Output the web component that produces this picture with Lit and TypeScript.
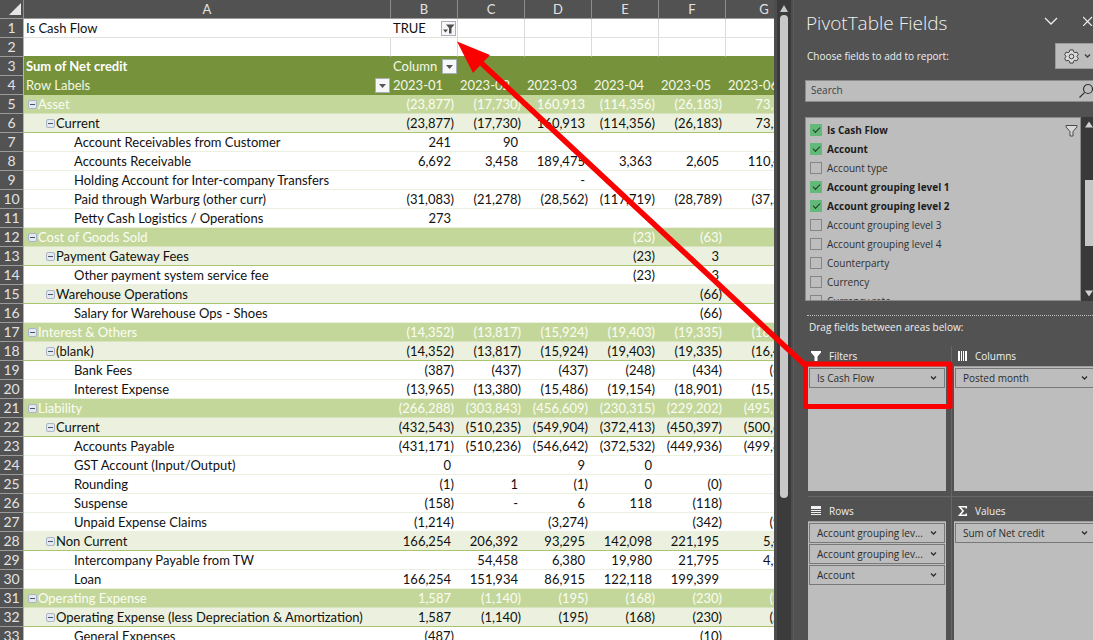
import { LitElement, html, svg, css, nothing } from "lit";
import { customElement } from "lit/decorators.js";
import { classMap } from "lit/directives/class-map.js";

type Kind = "page" | "blank" | "head" | "l1" | "l2" | "item";
interface Row {
  kind: Kind;
  label: string;
  cells: string[];
}

const r = (kind: Kind, label: string, cells = ""): Row => ({
  kind,
  label,
  cells: Array.from({ length: 6 }, (_, i) => (cells.split("|")[i] ?? "").trim()),
});

const ROWS: Row[] = [
  r("page", "Is Cash Flow", "TRUE"),
  r("blank", ""),
  r("head", "Sum of Net credit", "Column"),
  r("head", "Row Labels", "2023-01|2023-02|2023-03|2023-04|2023-05|2023-06"),
  r("l1", "Asset", "(23,877)|(17,730)|160,913|(114,356)|(26,183)|73,212"),
  r("l2", "Current", "(23,877)|(17,730)|160,913|(114,356)|(26,183)|73,212"),
  r("item", "Account Receivables from Customer", "241|90"),
  r("item", "Accounts Receivable", "6,692|3,458|189,475|3,363|2,605|110,461"),
  r("item", "Holding Account for Inter-company Transfers", "||-"),
  r("item", "Paid through Warburg (other curr)", "(31,083)|(21,278)|(28,562)|(117,719)|(28,789)|(37,249)"),
  r("item", "Petty Cash Logistics / Operations", "273"),
  r("l1", "Cost of Goods Sold", "|||(23)|(63)"),
  r("l2", "Payment Gateway Fees", "|||(23)|3"),
  r("item", "Other payment system service fee", "|||(23)|3"),
  r("l2", "Warehouse Operations", "||||(66)"),
  r("item", "Salary for Warehouse Ops - Shoes", "||||(66)"),
  r("l1", "Interest & Others", "(14,352)|(13,817)|(15,924)|(19,403)|(19,335)|(16,412)"),
  r("l2", "(blank)", "(14,352)|(13,817)|(15,924)|(19,403)|(19,335)|(16,412)"),
  r("item", "Bank Fees", "(387)|(437)|(437)|(248)|(434)|(640)"),
  r("item", "Interest Expense", "(13,965)|(13,380)|(15,486)|(19,154)|(18,901)|(15,772)"),
  r("l1", "Liability", "(266,288)|(303,843)|(456,609)|(230,315)|(229,202)|(495,121)"),
  r("l2", "Current", "(432,543)|(510,235)|(549,904)|(372,413)|(450,397)|(500,613)"),
  r("item", "Accounts Payable", "(431,171)|(510,236)|(546,642)|(372,532)|(449,936)|(499,820)"),
  r("item", "GST Account (Input/Output)", "0||9|0"),
  r("item", "Rounding", "(1)|1|(1)|0|(0)"),
  r("item", "Suspense", "(158)|-|6|118|(118)|158"),
  r("item", "Unpaid Expense Claims", "(1,214)||(3,274)||(342)|(951)"),
  r("l2", "Non Current", "166,254|206,392|93,295|142,098|221,195|5,492"),
  r("item", "Intercompany Payable from TW", "|54,458|6,380|19,980|21,795|4,992"),
  r("item", "Loan", "166,254|151,934|86,915|122,118|199,399|500"),
  r("l1", "Operating Expense", "1,587|(1,140)|(195)|(168)|(230)|(244)"),
  r("l2", "Operating Expense (less Depreciation & Amortization)", "1,587|(1,140)|(195)|(168)|(230)|(244)"),
  r("item", "General Expenses", "(487)||||(10)"),
];

const caret = svg`<path d="M1 1.5 L3.5 4 L6 1.5" fill="none" stroke="currentColor" stroke-width="1.3"/>`;

@customElement("pivot-sheet")
export class PivotSheet extends LitElement {
  static styles = css`
    :host {
      display: block;
      overflow: hidden;
      background: #fff;
      font-family: Lato, "Noto Sans", sans-serif;
      font-size: 13px;
      color: #111;
    }
    table {
      table-layout: fixed;
      width: 803px;
      border-collapse: separate;
      border-spacing: 0;
    }
    .c-num { width: 24px; }
    .c-a { width: 367px; }
    .c-m { width: 67px; }
    .c-g { width: 77px; }
    th, td {
      box-sizing: border-box;
      height: 19px;
      padding: 0 2px;
      line-height: 18px;
      font-weight: 400;
      text-align: left;
      white-space: nowrap;
      border-bottom: 1px solid #ebf0df;
      overflow: hidden;
    }
    .col, .num {
      padding: 0;
      text-align: center;
      background: #525252;
      color: #e2e2e2;
      border-right: 1px solid #8c8c8c;
      border-bottom: 1px solid #9b9b9b;
    }
    .corner svg { display: block; margin-left: 9px; }
    .num { font-size: 14px; border-right-color: #b4b4b4; }
    .fig { text-align: right; padding-right: 7px; }
    .neg { padding-right: 4px; }
    .page td, .blank td {
      border-right: 1px solid #dadada;
      border-bottom-color: #e2e2dc;
    }
    .page .label { border-right-color: #fff; }
    .blank .cell, .blank .label { border-bottom-color: #76933c; }
    .head .label, .head .cell {
      background: #76933c;
      border-bottom-color: #76933c;
      color: #f3f7e6;
    }
    .first .label { font-weight: 700; color: #fff; }
    .l1 .label, .l1 .cell {
      background: #c4d79b;
      border-bottom-color: #d8e4bf;
      color: #fbfdf4;
    }
    .l2 .label, .l2 .cell { background: #ebf1de; border-bottom-color: #a9c56f; }
    .item .label { padding-left: 50px; }
    .l1 .label { padding-left: 4px; }
    .l2 .label { padding-left: 22px; }
    .line { display: flex; align-items: center; height: 18px; }
    .line .drop { margin-left: auto; }
    button { font: inherit; padding: 0; border: 0; cursor: pointer; }
    .fold {
      display: grid;
      place-items: center;
      width: 9px;
      height: 9px;
      margin-right: 1px;
      background: #e4e9ef;
      border: 1px solid #aab4c8;
      border-radius: 2px;
      box-sizing: border-box;
    }
    .fold::before { content: ""; width: 5px; height: 1px; background: #44546a; }
    .drop {
      display: grid;
      place-items: center;
      flex: none;
      width: 15px;
      height: 15px;
      box-sizing: border-box;
      background: #f6f7f9;
      border: 1px solid #a9afbb;
      margin-right: -1px;
    }
  `;

  private drop(filtered = false) {
    return html`<button class="drop" aria-label="Filter">
      <svg width="13" height="13" viewBox="0 0 13 13">
        ${filtered
          ? svg`<path d="M4 2.5h8.500l-3 3.500v5.500h-2.500v-5.500z M1 7.500h5l-2.500 3z" fill="#4f4f4f"/>`
          : svg`<path d="M3 5h7l-3.500 4z" fill="#555"/>`}
      </svg>
    </button>`;
  }

  private label(row: Row) {
    const fold = row.kind === "l1" || row.kind === "l2";
    return html`<div class="line">
      ${fold ? html`<button class="fold" aria-label="Collapse ${row.label}"></button>` : nothing}
      <span>${row.label}</span>
      ${row.label === "Row Labels" ? this.drop() : nothing}
    </div>`;
  }

  private cell(row: Row, value: string) {
    if (value === "TRUE" || value === "Column") {
      return html`<td class="cell"><div class="line"><span>${value}</span>${this.drop(value === "TRUE")}</div></td>`;
    }
    const text = row.kind === "head" || row.kind === "page" || row.kind === "blank";
    return html`<td class=${classMap({ cell: true, fig: !text, neg: value.startsWith("(") })}>${value}</td>`;
  }

  render() {
    return html`<table>
      <colgroup>
        <col class="c-num" /><col class="c-a" />
        ${[1, 2, 3, 4, 5].map(() => html`<col class="c-m" />`)}
        <col class="c-g" />
      </colgroup>
      <thead>
        <tr>
          <th class="col corner">
            <svg width="12" height="12" viewBox="0 0 12 12"><path d="M12 0v12H0z" fill="#e6e6e6"/></svg>
          </th>
          ${["A", "B", "C", "D", "E", "F", "G"].map((c) => html`<th class="col" scope="col">${c}</th>`)}
        </tr>
      </thead>
      <tbody>
        ${ROWS.map(
          (row, i) => html`<tr class=${classMap({ [row.kind]: true, first: i === 2 })}>
            <th class="num" scope="row">${i + 1}</th>
            <td class="label">${this.label(row)}</td>
            ${row.cells.map((v) => this.cell(row, v))}
          </tr>`
        )}
      </tbody>
    </table>`;
  }
}

const FIELDS: [string, boolean][] = [
  ["Is Cash Flow", true],
  ["Account", true],
  ["Account type", false],
  ["Account grouping level 1", true],
  ["Account grouping level 2", true],
  ["Account grouping level 3", false],
  ["Account grouping level 4", false],
  ["Counterparty", false],
  ["Currency", false],
  ["Currency rate", false],
];

const AREAS = [
  {
    name: "Filters",
    items: ["Is Cash Flow"],
    icon: svg`<path d="M1 1h10v1.500l-3.500 4v4.500h-3v-4.500l-3.500-4z" fill="#fff"/>`,
  },
  {
    name: "Columns",
    items: ["Posted month"],
    icon: svg`<path d="M2 1h2v10h-2z M5 1h1v10h-1z M7 1h1v10h-1z M9 1h2v10h-2z" fill="#fff"/>`,
  },
  {
    name: "Rows",
    items: ["Account grouping lev...", "Account grouping lev...", "Account"],
    icon: svg`<path d="M1 1h10v3h-10z M1 5h10v1h-10z M1 7h10v1h-10z M1 9h10v1h-10z" fill="#f0f0f0"/>`,
  },
  {
    name: "Values",
    items: ["Sum of Net credit"],
    icon: svg`<path d="M10.300 3.500v-1.800h-6.800l3.700 4.300-3.700 4.300h6.800v-1.800" fill="none" stroke="#fff" stroke-width="1.500"/>`,
  },
];

@customElement("field-pane")
export class FieldPane extends LitElement {
  static styles = css`
    :host {
      display: flex;
      flex-direction: column;
      box-sizing: border-box;
      overflow: hidden;
      padding-left: 11px;
      border-left: 1px solid #5c5c5c;
      background: #525252;
      color: #f0f0f0;
      font-family: "Open Sans", "Noto Sans", sans-serif;
      font-size: 10px;
    }
    button, input { font: inherit; margin: 0; box-sizing: border-box; }
    button { padding: 0; border: 0; background: none; color: inherit; cursor: pointer; }
    svg { display: block; flex: none; }
    .top { display: flex; align-items: center; height: 42px; padding: 3px 0 0 1px; box-sizing: border-box; }
    h1 { margin: 0; font-size: 19px; font-weight: 300; flex: 1; line-height: 24px; }
    .actions { display: flex; gap: 25px; padding-bottom: 4px; }
    .choose { display: flex; align-items: center; height: 28px; padding-left: 2px; }
    .choose span { flex: 1; }
    .gear {
      display: flex;
      align-items: center;
      gap: 5px;
      width: 38px;
      height: 26px;
      padding-left: 8px;
      background: #bdbdbd;
      border: 1px solid #9a9a9a;
      border-right: 0;
      color: #3c3c3c;
    }
    .search {
      display: flex;
      align-items: center;
      height: 22px;
      margin-top: 10px;
      box-sizing: border-box;
      background: #bdbdbd;
      border: 1px solid #8b8b8b;
      border-right: 0;
      color: #333;
    }
    .search input { flex: 1; min-width: 0; padding: 0 5px 2px; border: 0; outline: 0; background: none; }
    .search input::placeholder { color: #3f3f3f; opacity: 1; }
    .fields { display: flex; height: 184px; margin-top: 15px; flex: none; }
    .list {
      position: relative;
      flex: 1;
      overflow: hidden;
      margin: 0;
      padding: 2px 4px;
      list-style: none;
      box-sizing: border-box;
      background: #bdbdbd;
      border: 1px solid #8b8b8b;
      color: #303030;
    }
    .list label { display: flex; align-items: center; gap: 5px; height: 19px; }
    .on { font-weight: 700; color: #1c1c1c; }
    .list input {
      appearance: none;
      display: grid;
      place-items: center;
      width: 12px;
      height: 12px;
      border: 1px solid #858585;
    }
    .list input:checked { background: #63b97a; border-color: #63b97a; }
    .list input:checked::before {
      content: "";
      width: 6px;
      height: 3px;
      margin-bottom: 2px;
      border: solid #1f3d28;
      border-width: 0 0 1px 1px;
      rotate: -45deg;
    }
    .funnel { position: absolute; right: 2px; top: 6px; }
    .bar {
      display: flex;
      flex-direction: column;
      align-items: center;
      width: 12px;
      padding: 4px 0;
      box-sizing: border-box;
      background: #393939;
    }
    .bar svg { margin-right: -3px; }
    .thumb { width: 8px; height: 66px; margin: 52px -3px auto 0; background: #c6c6c6; }
    .drag { margin: 14px 0 0 2px; padding: 4px 0 0 2px; height: 31px; box-sizing: border-box; border-top: 1px dotted #c4c4c4; }
    .areas {
      flex: 1;
      display: grid;
      grid-template-columns: 144px 1fr;
      grid-template-rows: 150px 1fr;
      padding-left: 3px;
    }
    .area { display: flex; flex-direction: column; min-width: 0; }
    .area:nth-child(odd) { border-right: 1px solid #666; padding-right: 5px; }
    .area:nth-child(even) { padding-left: 2px; }
    .area:nth-child(n + 3) { border-top: 1px solid #666; padding-top: 4px; }
    .area:nth-child(-n + 2) { padding-bottom: 5px; }
    h2 { display: flex; align-items: center; gap: 7px; margin: 0; padding-left: 2px; height: 20px; font-size: 10px; font-weight: 400; }
    .zone {
      flex: 1;
      display: flex;
      flex-direction: column;
      gap: 1px;
      padding: 1px;
      background: #bdbdbd;
      border-top: 1px solid #9d9d9d;
    }
    .area:nth-child(even) .zone { padding-right: 0; }
    .area:nth-child(even) .chip { border-right: 0; padding-right: 5px; }
    .chip {
      display: flex;
      align-items: center;
      height: 20px;
      padding: 0 7px;
      border: 1px solid #787878;
      color: #2c2c2c;
    }
    .chip span { flex: 1; text-align: left; white-space: nowrap; overflow: hidden; }
  `;

  render() {
    return html`
      <div class="top">
        <h1>PivotTable Fields</h1>
        <div class="actions">
          <button aria-label="Pane options">
            <svg width="14" height="10" viewBox="0 0 14 10"><path d="M1 2l6 6 6-6" fill="none" stroke="#eee" stroke-width="1.300"/></svg>
          </button>
          <button aria-label="Close">
            <svg width="10" height="10" viewBox="0 0 10 10"><path d="M0 1l9 9M9 1l-9 9" stroke="#eee" stroke-width="1.200"/></svg>
          </button>
        </div>
      </div>
      <div class="choose">
        <span>Choose fields to add to report:</span>
        <button class="gear" aria-label="Tools">
          <svg width="15" height="15" viewBox="0 0 15 15" fill="#d9d9d9" stroke="#444" stroke-width="1">
            <path d="M5.900 .900h3.200l.5 2 1.300.8 2-.6 1.500 2.700-1.500 1.400v.6l1.500 1.400-1.500 2.700-2-.6-1.300.8-.5 2h-3.200l-.5-2-1.300-.8-2 .6-1.500-2.700 1.500-1.400v-.6l-1.500-1.400 1.500-2.700 2 .6 1.300-.8z"/>
            <circle cx="7.500" cy="7.500" r="2.300"/>
          </svg>
          <svg width="7" height="6" viewBox="0 0 7 6">${caret}</svg>
        </button>
      </div>
      <div class="search">
        <input type="text" placeholder="Search" aria-label="Search" />
        <svg width="14" height="16" viewBox="0 0 14 16" fill="none" stroke="currentColor" stroke-width="1.200">
          <circle cx="9" cy="6" r="4.500"/><path d="M5.700 9.300L.5 14.500"/>
        </svg>
      </div>
      <div class="fields">
        <ul class="list">
          ${FIELDS.map(
            ([name, on]) => html`<li>
              <label class=${classMap({ on })}><input type="checkbox" .checked=${on} />${name}</label>
            </li>`
          )}
          <svg class="funnel" width="13" height="13" viewBox="0 0 13 13">
            <path d="M1 1.500h11v1.500l-4 4.500v4.500h-3v-4.500l-4-4.500z" fill="#d8d8d8" stroke="#4a4a4a"/>
          </svg>
        </ul>
        <div class="bar">
          <svg width="8" height="7" viewBox="0 0 8 7"><path d="M4 .5l4 6H0z" fill="#d0d0d0"/></svg>
          <div class="thumb"></div>
          <svg width="8" height="7" viewBox="0 0 8 7"><path d="M4 6.500l4-6H0z" fill="#d0d0d0"/></svg>
        </div>
      </div>
      <div class="drag">Drag fields between areas below:</div>
      <div class="areas">
        ${AREAS.map(
          (a) => html`<section class="area">
            <h2><svg width="12" height="12" viewBox="0 0 12 12">${a.icon}</svg>${a.name}</h2>
            <div class="zone">
              ${a.items.map(
                (t) => html`<button class="chip">
                  <span>${t}</span><svg width="7" height="6" viewBox="0 0 7 6">${caret}</svg>
                </button>`
              )}
            </div>
          </section>`
        )}
      </div>
    `;
  }
}

@customElement("app-root")
export class AppRoot extends LitElement {
  static styles = css`
    :host {
      position: relative;
      display: grid;
      grid-template-columns: minmax(0, 1fr) 19px 300px;
      height: 100vh;
      overflow: hidden;
    }
    .scroll {
      display: flex;
      flex-direction: column;
      align-items: center;
      gap: 3px;
      padding-top: 5px;
      box-sizing: border-box;
      background: #3b3b3b;
      border-left: 3px solid #4d4d4d;
      border-right: 2px solid #4d4d4d;
    }
    .scroll svg { display: block; flex: none; }
    .thumb { width: 8px; height: 76%; border-radius: 4px; background: #c8c8c8; }
    .note { position: absolute; inset: 0; width: 100%; height: 100%; pointer-events: none; }
  `;

  render() {
    return html`
      <pivot-sheet></pivot-sheet>
      <div class="scroll">
        <svg width="8" height="7" viewBox="0 0 8 7"><path d="M4 0l4 7H0z" fill="#c8c8c8"/></svg>
        <div class="thumb"></div>
      </div>
      <field-pane></field-pane>
      <svg class="note" aria-hidden="true">
        <rect x="805.500" y="364" width="144.500" height="42.500" fill="none" stroke="#fb0000" stroke-width="5" stroke-linejoin="round"/>
        <path d="M805 365L478 60" stroke="#fb0000" stroke-width="5.500"/>
        <path d="M457 41.500L490 55L473 73z" fill="#fb0000"/>
      </svg>
    `;
  }
}
